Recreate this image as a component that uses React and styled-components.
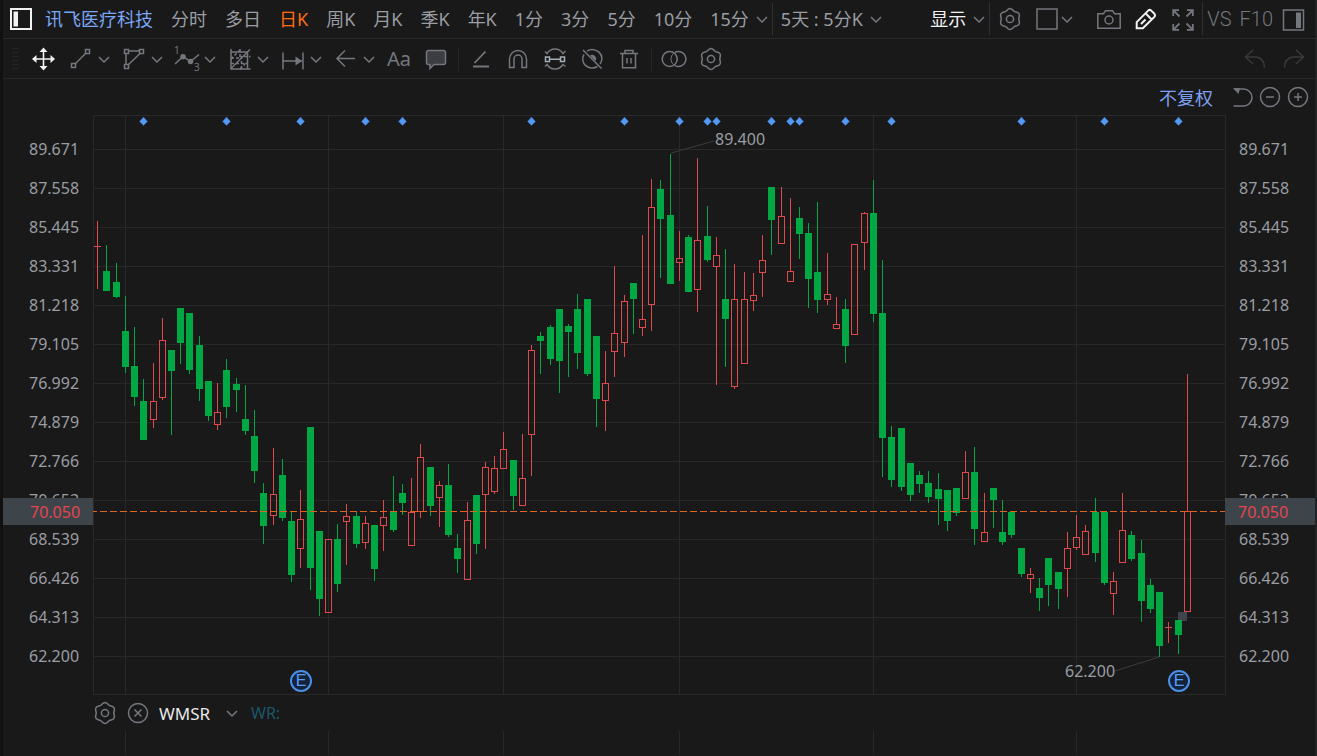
import React from "react";
import styled, { createGlobalStyle } from "styled-components";

const periods = ["1分", "3分", "5分", "10分"];
const kTabs = ["日K", "周K", "月K", "季K", "年K"];

const prices = [
  "89.671",
  "87.558",
  "85.445",
  "83.331",
  "81.218",
  "79.105",
  "76.992",
  "74.879",
  "72.766",
  "70.653",
  "68.539",
  "66.426",
  "64.313",
  "62.200",
];

// plot area in chart units
const PLOT_WIDTH = 1132;
const PLOT_HEIGHT = 580;
const TOP = 115;
const LEFT = 93;
const LAST_PRICE_Y = 511;

const gridColumns = [125, 328, 503, 679, 873, 1076];
const eventDays = [
  5, 14, 22, 29, 33, 47, 57, 63, 66, 67, 73, 75, 76, 81, 86, 100, 109, 117,
];

// direction, high, body top, body bottom, low
const candles = [
  ["u", 221, 246, 246, 289],
  ["d", 245, 271, 291, 291],
  ["d", 263, 282, 297, 298],
  ["d", 296, 331, 367, 373],
  ["d", 327, 366, 397, 406],
  ["d", 379, 401, 440, 440],
  ["u", 363, 401, 420, 428],
  ["u", 318, 340, 398, 400],
  ["d", 350, 350, 371, 435],
  ["d", 308, 308, 343, 364],
  ["d", 313, 313, 370, 374],
  ["d", 336, 345, 389, 401],
  ["d", 381, 381, 416, 421],
  ["u", 383, 412, 425, 430],
  ["d", 359, 370, 407, 418],
  ["d", 378, 384, 390, 412],
  ["d", 385, 419, 431, 435],
  ["d", 410, 436, 471, 483],
  ["d", 483, 493, 526, 544],
  ["u", 448, 494, 516, 525],
  ["d", 459, 475, 518, 521],
  ["d", 512, 521, 575, 582],
  ["u", 490, 519, 549, 568],
  ["d", 427, 427, 568, 590],
  ["d", 531, 531, 599, 616],
  ["u", 539, 539, 613, 613],
  ["d", 524, 539, 584, 592],
  ["u", 504, 516, 522, 565],
  ["d", 512, 516, 544, 548],
  ["u", 516, 523, 543, 549],
  ["d", 525, 525, 569, 581],
  ["u", 500, 517, 526, 551],
  ["d", 476, 512, 530, 532],
  ["d", 484, 493, 503, 515],
  ["u", 478, 512, 546, 546],
  ["u", 444, 457, 512, 518],
  ["d", 467, 467, 506, 516],
  ["u", 481, 485, 498, 527],
  ["d", 464, 485, 535, 537],
  ["d", 534, 548, 559, 573],
  ["u", 502, 520, 580, 580],
  ["d", 495, 495, 544, 554],
  ["u", 462, 467, 495, 549],
  ["u", 456, 468, 492, 494],
  ["u", 432, 449, 469, 469],
  ["d", 460, 460, 496, 510],
  ["u", 434, 478, 506, 506],
  ["u", 345, 350, 435, 476],
  ["d", 332, 336, 341, 374],
  ["d", 325, 327, 359, 365],
  ["d", 309, 309, 361, 393],
  ["d", 324, 326, 332, 377],
  ["d", 294, 309, 353, 369],
  ["d", 299, 299, 374, 376],
  ["d", 336, 336, 399, 427],
  ["u", 351, 383, 401, 431],
  ["u", 266, 333, 352, 377],
  ["u", 295, 301, 343, 357],
  ["d", 283, 283, 299, 334],
  ["u", 235, 319, 328, 336],
  ["u", 179, 207, 305, 331],
  ["d", 180, 189, 219, 278],
  ["d", 154, 215, 284, 284],
  ["u", 231, 258, 263, 281],
  ["d", 235, 237, 292, 292],
  ["u", 158, 240, 290, 312],
  ["d", 206, 236, 260, 262],
  ["u", 237, 255, 267, 385],
  ["d", 249, 299, 319, 367],
  ["u", 264, 299, 387, 389],
  ["u", 272, 299, 364, 364],
  ["u", 273, 295, 301, 311],
  ["u", 235, 260, 273, 297],
  ["d", 187, 187, 220, 255],
  ["u", 187, 216, 244, 244],
  ["u", 198, 271, 282, 282],
  ["d", 207, 218, 234, 259],
  ["d", 223, 233, 279, 308],
  ["d", 202, 272, 300, 313],
  ["u", 253, 294, 300, 305],
  ["u", 297, 324, 329, 329],
  ["d", 299, 309, 346, 363],
  ["u", 244, 244, 335, 335],
  ["u", 212, 213, 243, 270],
  ["d", 180, 213, 314, 322],
  ["d", 260, 313, 438, 477],
  ["d", 426, 437, 480, 487],
  ["d", 428, 428, 487, 491],
  ["d", 463, 463, 495, 501],
  ["d", 471, 475, 484, 493],
  ["d", 471, 483, 497, 503],
  ["d", 473, 489, 499, 525],
  ["d", 490, 490, 521, 531],
  ["d", 488, 488, 513, 516],
  ["u", 451, 472, 499, 499],
  ["d", 447, 472, 529, 545],
  ["u", 493, 532, 542, 542],
  ["d", 488, 488, 500, 528],
  ["d", 500, 532, 542, 545],
  ["d", 512, 512, 535, 538],
  ["d", 548, 548, 574, 577],
  ["u", 568, 574, 579, 593],
  ["d", 578, 588, 598, 611],
  ["d", 558, 558, 585, 606],
  ["d", 572, 572, 589, 609],
  ["u", 532, 548, 569, 597],
  ["u", 515, 537, 548, 550],
  ["u", 525, 531, 555, 555],
  ["d", 498, 512, 553, 562],
  ["d", 512, 512, 583, 585],
  ["u", 572, 581, 594, 615],
  ["u", 493, 530, 563, 563],
  ["d", 531, 535, 559, 561],
  ["d", 540, 553, 601, 622],
  ["d", 579, 585, 609, 613],
  ["d", 592, 592, 646, 657],
  ["u", 622, 627, 627, 643],
  ["d", 620, 620, 635, 654],
  ["u", 374, 511, 612, 612],
];

const dayX = (index) => Math.floor(97.61 + 9.2353 * index) - LEFT;

const gearPath = Array.from({ length: 73 }, (_, i) => {
  const angle = (i * 5 * Math.PI) / 180;
  const r = 9.6 + 0.8 * Math.cos(6 * angle);
  const x = (12 + r * Math.sin(angle)).toFixed(2);
  const y = (12 - r * Math.cos(angle)).toFixed(2);
  return `${i ? "L" : "M"}${x} ${y}`;
}).join("");

const icons = {
  sidebar: (
    <>
      <rect x="2" y="2" width="20" height="20" strokeWidth="2" />
      <rect x="4.5" y="4.5" width="4.5" height="15" fill="currentColor" stroke="none" />
    </>
  ),
  gear: (
    <>
      <path d={gearPath} />
      <circle cx="12" cy="12" r="3.6" />
    </>
  ),
  square: <rect x="2" y="2" width="20" height="20" />,
  camera: (
    <>
      <path d="M.8 6.7h5.7l2-3h7l2 3h5.7v14.6H.8z" />
      <circle cx="12" cy="13" r="4" />
    </>
  ),
  pencil: (
    <path
      d="M2.7 21.3v-6.2L14.4 3.4q1.3-1 2.6 0l3.6 3.6q1 1.3 0 2.6L8.9 21.3zM11.5 6.3l6.2 6.2M7 17l4.5-4.5"
      strokeWidth="2"
    />
  ),
  expand: (
    <path
      d="M2.2 9V3.2H8M2.2 3.2l6.3 6.3M16 3.2h5.8V9M21.8 3.2l-6.3 6.3M2.2 17v5.8H8M2.2 22.8l6.3-6.3M16 22.8h5.8V17M21.8 22.8l-6.3-6.3"
      strokeWidth="1.8"
    />
  ),
  panel: (
    <>
      <rect x="2.5" y="3" width="20" height="20" />
      <rect x="15" y="5.5" width="5" height="15.5" fill="currentColor" stroke="none" />
    </>
  ),
  handle: (
    <path d="M9 1.5h6M9 5.5h6M9 9.5h6M9 13.5h6M9 17.5h6M9 21.5h6" strokeWidth="1" />
  ),
  move: (
    <>
      <path d="M11.5 3v18M3 12h18" strokeWidth="1.6" />
      <path
        d="M11.5 .5l4 4.5h-8zM11.5 23.5l4-4.5h-8zM0 12l4.5-4v8zM23 12l-4.5-4v8z"
        fill="currentColor"
        stroke="none"
      />
    </>
  ),
  line: (
    <>
      <rect x="2.5" y="16.5" width="4" height="4" />
      <rect x="16.5" y="2.5" width="4" height="4" />
      <path d="M6.5 16.5l10-10" />
    </>
  ),
  shape: (
    <>
      <rect x="2.5" y="2.5" width="4" height="4" />
      <rect x="17.5" y="2.5" width="4" height="4" />
      <rect x="2.5" y="17.5" width="4" height="4" />
      <path d="M6.5 4h11M4 6.5v11M6.5 17.5l11.5-11" />
    </>
  ),
  wave: (
    <>
      <path d="M0 17l8-7.5 7.5 5L24 7.5" />
      <circle cx="8" cy="9.7" r="2" fill="currentColor" />
      <circle cx="15.5" cy="14.5" r="2" fill="currentColor" />
      <text x="-1" y="7" fontSize="10" fill="currentColor" stroke="none">1</text>
      <text x="19" y="24" fontSize="10" fill="currentColor" stroke="none">3</text>
    </>
  ),
  fib: (
    <>
      <path d="M3 2v20h19.5" />
      <path d="M3 5h16.5v17M3 21.5L22 2.5" />
      <path d="M3 11h9V2M3 16.5h16M13.5 22V9.5h9" strokeDasharray="3 2" />
      <path d="M3 12L12 3M12 22l8-8" strokeDasharray="3 2" />
    </>
  ),
  measure: (
    <>
      <path d="M2 5.5v17M22 5.5v17M2 14h19" />
      <path d="M14.5 9.5L21 14l-6.5 4.5z" fill="currentColor" stroke="none" />
    </>
  ),
  arrow: <path d="M3 11.5h18M11 3.5l-8 8 8 8" />,
  comment: (
    <path
      d="M4.5 3.5h15q2 0 2 2v10q0 2-2 2H10l-4 4v-4H4.5q-2 0-2-2v-10q0-2 2-2z"
      fill="#3b3d42"
    />
  ),
  angle: <path d="M4 19.5h16M5.5 16L16.5 4.5" strokeWidth="1.8" />,
  magnet: (
    <path d="M3.5 20.5V12a8.5 8.5 0 0 1 17 0v8.5H16V12a4 4 0 0 0-8 0v8.5z" />
  ),
  sync: (
    <>
      <path d="M2 4.5l2 2Q7 2 12 2t8 4.5L22.500 4" />
      <path d="M2 19.5l2-2q3 4.500 8 4.500t8-4.500l2.500 2" />
      <path d="M2.5 10h4v4.5h-4zM17.5 10h4v4.5h-4zM6.5 12.2h11" stroke="#a3adb8" />
    </>
  ),
  hide: (
    <>
      <path d="M7 4.2A9.5 9 0 0 1 20 17M17.5 19.5A9.5 9 0 0 1 4 7.5M3 3l18.5 18.5" />
      <path d="M10 8.5a4 4 0 0 1 5.5 5.5z" fill="currentColor" stroke="none" />
    </>
  ),
  trash: (
    <path d="M3 6.5h18M8 6V3.5h8V6M5.5 6.5v14.2h13V6.5M10 11v5.5M14 11v5.5" />
  ),
  circles: (
    <>
      <circle cx="7.7" cy="12" r="7.5" />
      <path d="M12.8 5.4a7.5 7.5 0 1 1 0 13.2" />
      <path d="M12 6a7.5 7.5 0 0 0 0 12" strokeWidth="1" />
    </>
  ),
  undo: <path d="M10 3L2.5 10l7.5 7M2.5 10H13q8 1 8.5 10.5" />,
  redo: <path d="M14 3l7.5 7-7.5 7M21.5 10H11q-8 1-8.5 10.5" />,
  restore: (
    <>
      <path d="M4 4h9.5a8.5 8.5 0 0 1 0 17H3.5" />
      <path d="M3 3.3h7L8.5 9z" fill="currentColor" stroke="none" />
    </>
  ),
  minus: (
    <>
      <circle cx="12" cy="12" r="9.5" />
      <path d="M8 12h8" />
    </>
  ),
  plus: (
    <>
      <circle cx="12" cy="12" r="9.5" />
      <path d="M8 12h8M12 8v8" />
    </>
  ),
  close: (
    <>
      <circle cx="12" cy="12" r="9.5" />
      <path d="M8.5 8.5l7 7M15.5 8.5l-7 7" />
    </>
  ),
};

const Icon = ({ name }) => (
  <StyledIcon viewBox="0 0 24 24" aria-hidden="true">
    {icons[name]}
  </StyledIcon>
);

const Chevron = () => (
  <StyledChevron viewBox="0 0 12 12" aria-hidden="true">
    <path d="M1 4l5 5 5-5" />
  </StyledChevron>
);

const Tool = ({ name, label, tone }) => (
  <IconButton aria-label={label} $tone={tone}>
    <Icon name={name} />
  </IconButton>
);

const MenuTool = ({ name, label }) => (
  <MenuButton aria-label={label}>
    <Icon name={name} />
    <Chevron />
  </MenuButton>
);

const Candle = ({ index, candle }) => {
  const [direction, high, top, bottom, low] = candle;
  const x = dayX(index);
  const isUp = direction === "u";
  const color = isUp ? "#de4a4b" : "#00a843";

  return (
    <g fill={color}>
      {top > high && <rect x={x} y={high - TOP} width="1" height={top - high} />}
      {low > bottom && (
        <rect x={x} y={bottom - TOP} width="1" height={low - bottom} />
      )}
      {top === bottom && <rect x={x - 3} y={top - TOP} width="7" height="1" />}
      {top !== bottom && !isUp && (
        <rect x={x - 3} y={top - TOP} width="7" height={bottom - top} />
      )}
      {top !== bottom && isUp && (
        <rect
          x={x - 2.5}
          y={top - TOP + 0.5}
          width="6"
          height={bottom - top - 1}
          fill="none"
          stroke={color}
        />
      )}
    </g>
  );
};

const Plot = () => (
  <PlotArea>
    <PlotSvg
      viewBox={`0 0 ${PLOT_WIDTH} ${PLOT_HEIGHT}`}
      preserveAspectRatio="none"
      role="img"
      aria-label="日K"
    >
      <g fill="#282828">
        <rect x="0" y="0" width={PLOT_WIDTH} height="1" />
        <rect x="0" y="579" width={PLOT_WIDTH} height="1" />
        <rect x="0" y="0" width="1" height={PLOT_HEIGHT} />
        {prices.map((price, index) => (
          <rect key={price} x="0" y={34 + index * 39} width={PLOT_WIDTH} height="1" />
        ))}
        {gridColumns.map((x) => (
          <rect key={x} x={x - LEFT} y="0" width="1" height={PLOT_HEIGHT} />
        ))}
      </g>
      <rect x="1085" y="497" width="9" height="9" fill="#3f444c" />
      {candles.map((candle, index) => (
        <Candle key={index} index={index} candle={candle} />
      ))}
      {eventDays.map((day) => (
        <path
          key={day}
          d={`M${dayX(day) + 0.5} 2l4 4.5-4 4-4-4z`}
          fill="#5499f2"
          stroke="#2f66b0"
          strokeWidth="0.5"
        />
      ))}
      <path
        d={`M-3 ${LAST_PRICE_Y - TOP + 0.5}H${PLOT_WIDTH}`}
        fill="none"
        stroke="#e0651c"
        strokeWidth="1"
        strokeDasharray="7 3"
      />
      <path d="M578 38l43-12M1066 542l-44 14" stroke="#3c3c3c" fill="none" />
    </PlotSvg>
    <PlotNote style={{ left: `${(622 / PLOT_WIDTH) * 100}%`, top: 12 }}>
      89.400
    </PlotNote>
    <PlotNote style={{ left: `${(972 / PLOT_WIDTH) * 100}%`, top: 544 }}>
      62.200
    </PlotNote>
    {[22, 117].map((day) => (
      <Earnings key={day} style={{ left: `${((dayX(day) - 10) / PLOT_WIDTH) * 100}%` }}>
        E
      </Earnings>
    ))}
  </PlotArea>
);

const PriceAxis = ({ side }) => (
  <Axis $side={side}>
    {prices.map((price) => (
      <AxisLabel key={price}>{price}</AxisLabel>
    ))}
    <LastPrice $side={side}>70.050</LastPrice>
  </Axis>
);

const App = () => {
  return (
    <>
      <GlobalStyle />
      <Page>
        <Header>
          <IconButton aria-label="侧栏" $tone="bright">
            <Icon name="sidebar" />
          </IconButton>
          <StockName href="#">讯飞医疗科技</StockName>
          <Tabs>
            <Tab>分时</Tab>
            <Tab>多日</Tab>
            {kTabs.map((tab) => (
              <Tab key={tab} $active={tab === "日K"}>
                {tab}
              </Tab>
            ))}
            {periods.map((period) => (
              <Tab key={period}>{period}</Tab>
            ))}
            <Tab>
              15分
              <Chevron />
            </Tab>
          </Tabs>
          <HeaderDivider />
          <Tab>
            5天 : 5分K
            <Chevron />
          </Tab>
          <HeaderRight>
            <Tab $bright>
              显示
              <Chevron />
            </Tab>
            <HeaderDivider />
            <RightIcons>
              <Tool name="gear" label="设置" />
              <MenuButton aria-label="布局" $tight>
                <Icon name="square" />
                <Chevron />
              </MenuButton>
            </RightIcons>
            <RightIcons $spaced>
              <Tool name="camera" label="截图" />
              <Tool name="pencil" label="画图" tone="bright" />
              <Tool name="expand" label="全屏" />
            </RightIcons>
            <HeaderDivider $narrow />
            <CodeButton>VS</CodeButton>
            <CodeButton>F10</CodeButton>
            <Tool name="panel" label="右栏" />
          </HeaderRight>
        </Header>

        <Toolbar>
          <Handle>
            <Icon name="handle" />
          </Handle>
          <ToolGroup>
            <Tool name="move" label="移动" tone="bright" />
            <MenuTool name="line" label="线段" />
            <MenuTool name="shape" label="图形" />
            <MenuTool name="wave" label="波浪" />
            <MenuTool name="fib" label="斐波那契" />
            <MenuTool name="measure" label="测量" />
            <MenuTool name="arrow" label="箭头" />
            <TextTool>Aa</TextTool>
            <Tool name="comment" label="标注" />
          </ToolGroup>
          <ToolDivider />
          <ToolGroup>
            <Tool name="angle" label="角度" />
            <Tool name="magnet" label="吸附" />
            <Tool name="sync" label="同步" />
            <Tool name="hide" label="隐藏" />
            <Tool name="trash" label="删除" />
          </ToolGroup>
          <ToolDivider />
          <ToolGroup>
            <Tool name="circles" label="对比" />
            <Tool name="gear" label="画图设置" />
          </ToolGroup>
          <History>
            <Tool name="undo" label="撤销" tone="dim" />
            <Tool name="redo" label="重做" tone="dim" />
          </History>
        </Toolbar>

        <ChartHead>
          <AdjustButton>不复权</AdjustButton>
          <Tool name="restore" label="还原" />
          <Tool name="minus" label="缩小" />
          <Tool name="plus" label="放大" />
        </ChartHead>

        <Chart>
          <PriceAxis side="left" />
          <Plot />
          <PriceAxis side="right" />
        </Chart>

        <Indicator>
          <Tool name="gear" label="指标设置" />
          <Tool name="close" label="关闭指标" />
          <IndicatorSelect aria-label="指标" defaultValue="WMSR">
            <option>WMSR</option>
          </IndicatorSelect>
          <Chevron />
          <IndicatorValue>WR:</IndicatorValue>
        </Indicator>
        <SubPlot>
          <PlotFrame viewBox={`0 0 ${PLOT_WIDTH} 24`} preserveAspectRatio="none">
            {gridColumns.map((x) => (
              <rect key={x} x={x - LEFT} y="0" width="1" height="24" fill="#282828" />
            ))}
          </PlotFrame>
        </SubPlot>
      </Page>
    </>
  );
};
export default App;

const GlobalStyle = createGlobalStyle`
  * {
    box-sizing: border-box;
  }

  body {
    margin: 0;
    background-color: #191919;
    color: #9a9da3;
    font-family: "Noto Sans", "Noto Sans CJK SC", sans-serif;
    font-size: 16px;
  }
`;

const tones = {
  bright: "#f2f2f2",
  dim: "#38393b",
};

const Page = styled.main`
  min-height: 100vh;
  border-left: 3px solid #111111;
  border-right: 2px solid #232323;
`;

const Header = styled.header`
  display: flex;
  align-items: center;
  height: 39px;
  padding: 0 10px 0 6px;
  border-bottom: 1px solid #2a2a2a;
  font-size: 18px;
  line-height: 24px;
`;

const StyledIcon = styled.svg`
  display: block;
  flex: none;
  width: 24px;
  height: 24px;
  overflow: visible;
  fill: none;
  stroke: currentColor;
  stroke-width: 1.5;
`;

const StyledChevron = styled.svg`
  flex: none;
  width: 12px;
  height: 12px;
  color: #74777d;
  fill: none;
  stroke: currentColor;
  stroke-width: 1.5;
  pointer-events: none;
`;

const Button = styled.button`
  padding: 0;
  border: none;
  background: none;
  color: #74777d;
  font: inherit;
  white-space: nowrap;
`;

const IconButton = styled(Button)`
  flex: none;
  color: ${({ $tone }) => tones[$tone] || "#74777d"};
`;

const MenuButton = styled(Button)`
  display: flex;
  align-items: center;
  gap: ${({ $tight }) => ($tight ? "2px" : "5px")};
`;

const StockName = styled.a`
  margin: 0 18px 0 12px;
  color: #7ba6f4;
  text-decoration: none;
  white-space: nowrap;
`;

const Tabs = styled.nav`
  display: flex;
  gap: 18px;
`;

const Tab = styled(Button)`
  display: flex;
  align-items: center;
  gap: 7px;
  color: ${({ $active, $bright }) =>
    $active ? "#ff6b12" : $bright ? "#f2f2f2" : "#9a9da3"};
`;

const HeaderDivider = styled.div`
  flex: none;
  width: 1px;
  height: 32px;
  margin: ${({ $narrow }) => ($narrow ? "0 4px 0 7px" : "0 8px 0 4px")};
  background-color: #303030;
`;

const HeaderRight = styled.div`
  display: flex;
  align-items: center;
  margin-left: auto;
`;

const RightIcons = styled.div`
  display: flex;
  align-items: center;
  gap: 13px;
  margin-left: ${({ $spaced }) => ($spaced ? "24px" : "0")};
`;

const CodeButton = styled(Button)`
  margin-right: 8px;
  font-family: Roboto, sans-serif;
  font-size: 20px;
  font-weight: 300;
`;

const Toolbar = styled.div`
  display: flex;
  height: 40px;
  padding: 8px 9px 7px 0;
  border-bottom: 1px solid #262626;
`;

const Handle = styled.div`
  margin-right: 5px;
  color: #262626;
`;

const ToolGroup = styled.div`
  display: flex;
  align-items: center;
  gap: 13px;

  ${MenuButton} {
    margin-right: -1px;
  }
`;

const TextTool = styled(Button)`
  width: 24px;
  font-size: 20px;
  line-height: 24px;
`;

const ToolDivider = styled.div`
  width: 1px;
  margin: 0 10px;
  background-color: #262626;
`;

const History = styled.div`
  display: flex;
  gap: 15px;
  margin-left: auto;
`;

const ChartHead = styled.div`
  display: flex;
  align-items: center;
  justify-content: flex-end;
  gap: 4px;
  height: 36px;
  padding-right: 5px;
`;

const AdjustButton = styled(Button)`
  margin-right: 13px;
  color: #7d9ff0;
  font-size: 18px;
`;

const Chart = styled.section`
  display: grid;
  grid-template-columns: 90px 1fr 90px;
`;

const Axis = styled.div`
  position: relative;
  padding-top: 15px;
  padding-left: ${({ $side }) => ($side === "left" ? "26px" : "13px")};
  border-left: ${({ $side }) => ($side === "left" ? "none" : "1px solid #282828")};
`;

const AxisLabel = styled.div`
  height: 39px;
  line-height: 39px;
`;

const LastPrice = styled.div`
  position: absolute;
  top: 383px;
  left: ${({ $side }) => ($side === "left" ? "0" : "-1px")};
  right: 0;
  height: 27px;
  padding-left: ${({ $side }) => ($side === "left" ? "27px" : "13px")};
  background-color: #3d454b;
  color: #e4454e;
  line-height: 29px;
`;

const PlotArea = styled.div`
  position: relative;
`;

const PlotSvg = styled.svg`
  display: block;
  width: 100%;
  height: 580px;
`;

const PlotNote = styled.span`
  position: absolute;
  line-height: 24px;
`;

const Earnings = styled.span`
  position: absolute;
  bottom: 3px;
  width: 22px;
  height: 22px;
  border: 2px solid #4a8fe6;
  border-radius: 50%;
  background-color: #15233a;
  color: #5a9ff5;
  font-family: "Liberation Sans", sans-serif;
  line-height: 18px;
  text-align: center;
`;

const Indicator = styled.div`
  display: flex;
  align-items: center;
  height: 36px;
  padding-left: 90px;

  ${IconButton} {
    margin-right: 9px;
  }
`;

const IndicatorSelect = styled.select`
  width: 67px;
  padding: 0;
  appearance: none;
  border: none;
  background: none;
  color: #e8e8e8;
  font: inherit;
  font-size: 17px;
`;

const IndicatorValue = styled.span`
  margin-left: 13px;
  color: #1d5768;
`;

const SubPlot = styled.div`
  padding: 0 90px;
`;

const PlotFrame = styled.svg`
  display: block;
  width: 100%;
  height: 24px;
`;
